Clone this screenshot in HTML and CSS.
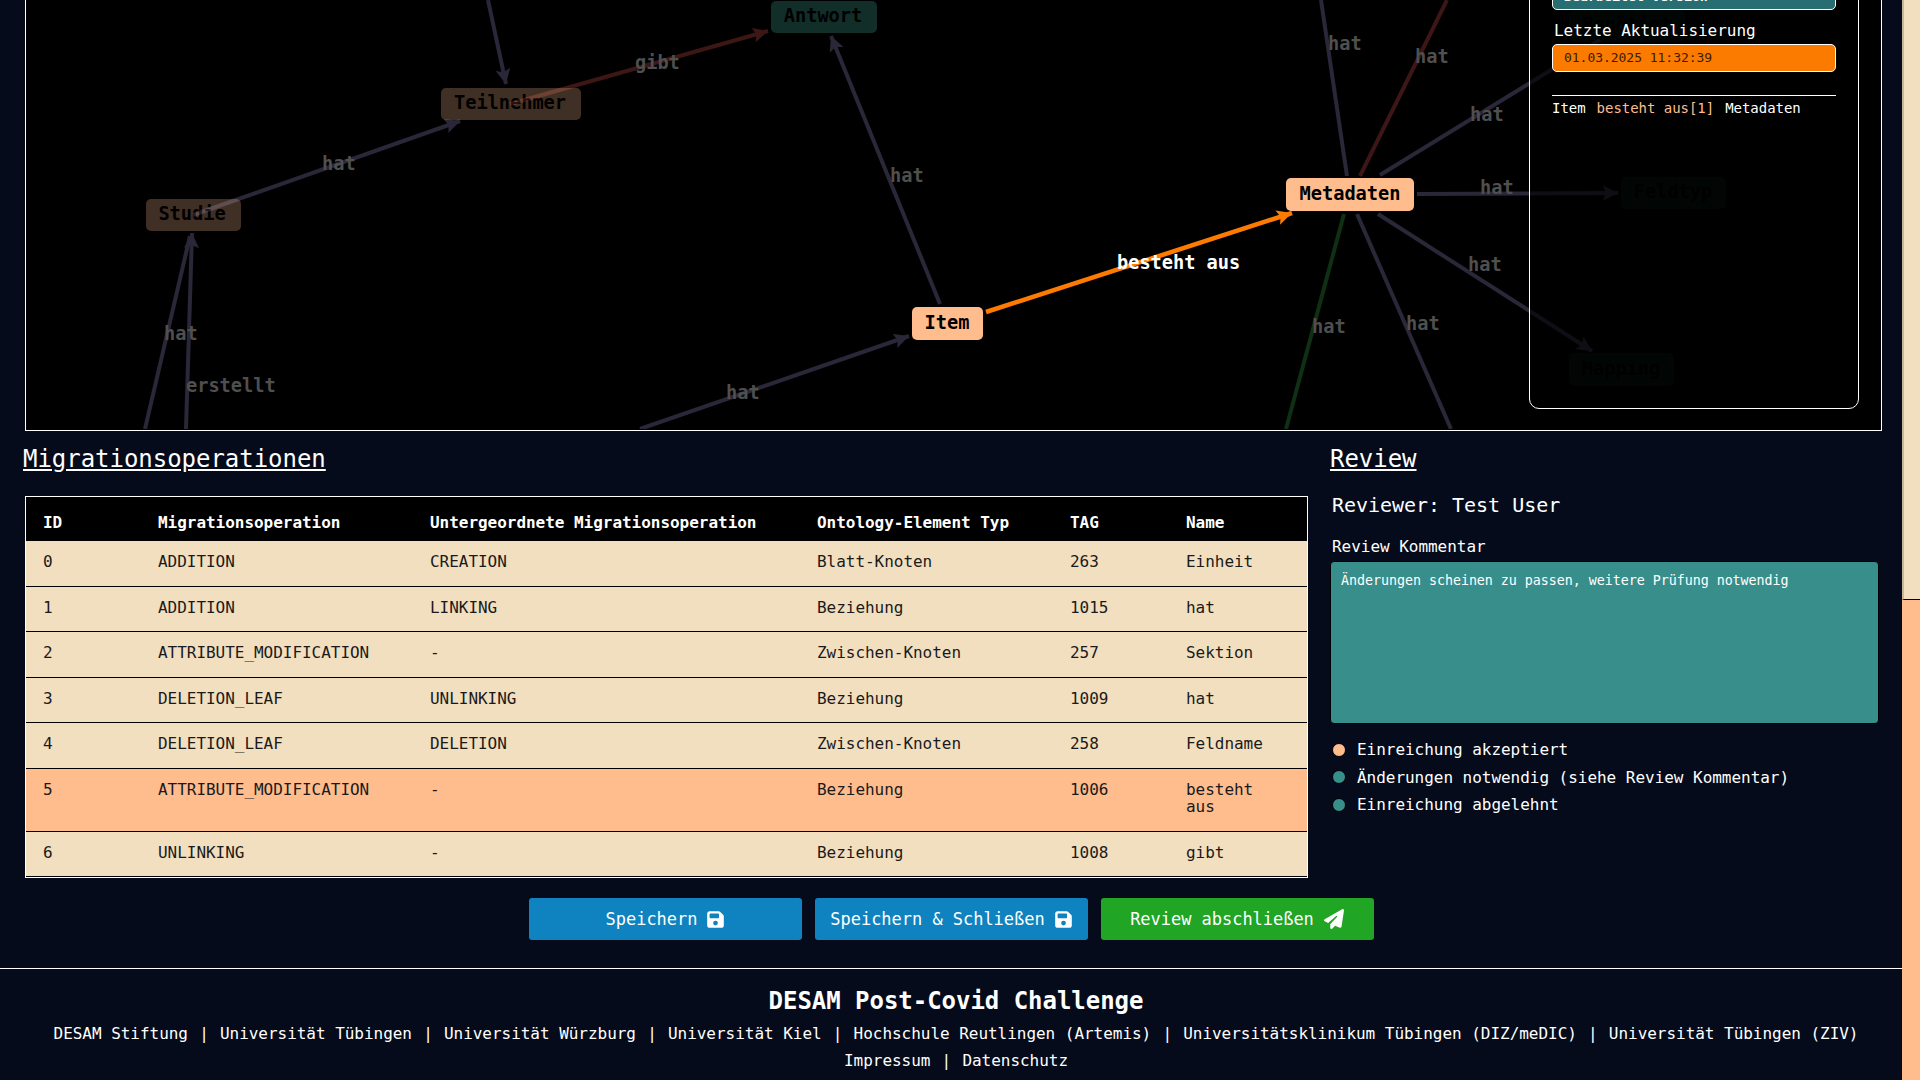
FILE: index.html
```html
<!DOCTYPE html>
<html lang="de">
<head>
<meta charset="utf-8">
<title>DESAM Post-Covid Challenge</title>
<link rel="stylesheet" href="styles.css">
</head>
<body>
<div class="page">
  <main class="main">
    <section class="graph">
      <svg class="canvas" width="1855" height="429" viewBox="26 0 1855 429">
        <defs>
          <marker id="a-purple" viewBox="0 0 10 10" refX="10" refY="5" markerWidth="15" markerHeight="15" markerUnits="userSpaceOnUse" orient="auto"><path d="M0 0L10 5L0 10L2 5Z" fill="#2a2738"/></marker>
          <marker id="a-red" viewBox="0 0 10 10" refX="10" refY="5" markerWidth="15" markerHeight="15" markerUnits="userSpaceOnUse" orient="auto"><path d="M0 0L10 5L0 10L2 5Z" fill="#3d1715"/></marker>
          <marker id="a-orange" viewBox="0 0 10 10" refX="10" refY="5" markerWidth="15" markerHeight="15" markerUnits="userSpaceOnUse" orient="auto"><path d="M0 0L10 5L0 10L2 5Z" fill="#ff7b00"/></marker>
        </defs>
        <g class="edges">
          <line class="e purple" x1="193" y1="215" x2="460" y2="121" marker-end="url(#a-purple)"/>
          <line class="e purple" x1="488" y1="0" x2="506" y2="84" marker-end="url(#a-purple)"/>
          <line class="e red" x1="510" y1="104" x2="768" y2="31" marker-end="url(#a-red)"/>
          <line class="e purple" x1="940" y1="304" x2="831" y2="36" marker-end="url(#a-purple)"/>
          <line class="e purple" x1="640" y1="429" x2="909" y2="336" marker-end="url(#a-purple)"/>
          <line class="e purple" x1="145" y1="429" x2="190" y2="236"/>
          <line class="e purple" x1="186" y1="429" x2="192" y2="233" marker-end="url(#a-purple)"/>
          <line class="e purple" x1="1321" y1="0" x2="1347" y2="176"/>
          <line class="e red" x1="1447" y1="0" x2="1360" y2="176"/>
          <line class="e purple" x1="1380" y1="175" x2="1600" y2="40"/>
          <line class="e purple" x1="1417" y1="194" x2="1618" y2="193" marker-end="url(#a-purple)"/>
          <line class="e purple" x1="1378" y1="214" x2="1592" y2="351" marker-end="url(#a-purple)"/>
          <line class="e purple" x1="1357" y1="214" x2="1451" y2="429"/>
          <line class="e green" x1="1344" y1="214" x2="1286" y2="429"/>
          <line class="e orange" x1="986" y1="312" x2="1292" y2="213" marker-end="url(#a-orange)"/>
        </g>
        <g class="labels">
          <text class="lbl" x="322" y="170">hat</text>
          <text class="lbl" x="635" y="69">gibt</text>
          <text class="lbl" x="890" y="182">hat</text>
          <text class="lbl" x="726" y="399">hat</text>
          <text class="lbl" x="164" y="340">hat</text>
          <text class="lbl" x="186" y="392">erstellt</text>
          <text class="lbl" x="1328" y="50">hat</text>
          <text class="lbl" x="1415" y="63">hat</text>
          <text class="lbl" x="1470" y="121">hat</text>
          <text class="lbl" x="1480" y="194">hat</text>
          <text class="lbl" x="1468" y="271">hat</text>
          <text class="lbl" x="1406" y="330">hat</text>
          <text class="lbl" x="1312" y="333">hat</text>
          <text class="lbl on" x="1117" y="269">besteht aus</text>
        </g>
        <g class="node peach dim"><rect x="441" y="88" width="140" height="32" rx="5"/><text x="510" y="109">Teilnehmer</text></g>
        <g class="node peach dim"><rect x="146" y="199" width="95" height="32" rx="5"/><text x="192" y="220">Studie</text></g>
        <g class="node teal dim"><rect x="771" y="1" width="106" height="32" rx="5"/><text x="823" y="22">Antwort</text></g>
        <g class="node teal faint"><rect x="1569" y="10" width="116" height="32" rx="5"/><text x="1627" y="31">Benötigt</text></g>
        <g class="node teal faint"><rect x="1621" y="177" width="105" height="32" rx="5"/><text x="1673" y="198">Feldtyp</text></g>
        <g class="node teal faint"><rect x="1569" y="353" width="105" height="33" rx="5"/><text x="1621" y="375">Mapping</text></g>
        <g class="node peach"><rect x="912" y="307" width="71" height="33" rx="5"/><text x="947" y="329">Item</text></g>
        <g class="node peach"><rect x="1286" y="178" width="128" height="33" rx="5"/><text x="1350" y="200">Metadaten</text></g>
      </svg>
      <aside class="panel">
        <div class="status">Bearbeitet Version</div>
        <div class="panel-label">Letzte Aktualisierung</div>
        <div class="stamp">01.03.2025 11:32:39</div>
        <hr class="panel-rule">
        <div class="path"><span>Item</span><span class="rel">besteht aus[1]</span><span>Metadaten</span></div>
      </aside>
    </section>

    <section class="work">
      <div class="ops">
        <h2 class="title">Migrationsoperationen</h2>
        <table class="table">
          <colgroup>
            <col class="c1"><col class="c2"><col class="c3"><col class="c4"><col class="c5"><col class="c6">
          </colgroup>
          <thead>
            <tr><th>ID</th><th>Migrationsoperation</th><th>Untergeordnete Migrationsoperation</th><th>Ontology-Element Typ</th><th>TAG</th><th>Name</th></tr>
          </thead>
          <tbody>
            <tr><td>0</td><td>ADDITION</td><td>CREATION</td><td>Blatt-Knoten</td><td>263</td><td>Einheit</td></tr>
            <tr><td>1</td><td>ADDITION</td><td>LINKING</td><td>Beziehung</td><td>1015</td><td>hat</td></tr>
            <tr><td>2</td><td>ATTRIBUTE_MODIFICATION</td><td>-</td><td>Zwischen-Knoten</td><td>257</td><td>Sektion</td></tr>
            <tr><td>3</td><td>DELETION_LEAF</td><td>UNLINKING</td><td>Beziehung</td><td>1009</td><td>hat</td></tr>
            <tr><td>4</td><td>DELETION_LEAF</td><td>DELETION</td><td>Zwischen-Knoten</td><td>258</td><td>Feldname</td></tr>
            <tr class="active"><td>5</td><td>ATTRIBUTE_MODIFICATION</td><td>-</td><td>Beziehung</td><td>1006</td><td>besteht aus</td></tr>
            <tr><td>6</td><td>UNLINKING</td><td>-</td><td>Beziehung</td><td>1008</td><td>gibt</td></tr>
          </tbody>
        </table>
      </div>
      <div class="review">
        <h2 class="title">Review</h2>
        <div class="reviewer">Reviewer: Test User</div>
        <div class="comment-label">Review Kommentar</div>
        <div class="comment">Änderungen scheinen zu passen, weitere Prüfung notwendig</div>
        <ul class="choices">
          <li class="choice"><span class="dot on"></span>Einreichung akzeptiert</li>
          <li class="choice"><span class="dot"></span>Änderungen notwendig (siehe Review Kommentar)</li>
          <li class="choice"><span class="dot"></span>Einreichung abgelehnt</li>
        </ul>
      </div>
    </section>

    <div class="actions">
      <button class="btn blue">Speichern <svg class="ico" viewBox="0 0 448 512"><path d="M64 32C28.7 32 0 60.7 0 96V416c0 35.3 28.7 64 64 64H384c35.3 0 64-28.7 64-64V173.3c0-17-6.7-33.3-18.7-45.3L352 50.7C340 38.7 323.7 32 306.7 32H64zm0 96c0-17.7 14.3-32 32-32H288c17.7 0 32 14.3 32 32v64c0 17.7-14.3 32-32 32H96c-17.7 0-32-14.3-32-32V128zM224 288a64 64 0 1 1 0 128 64 64 0 1 1 0-128z"/></svg></button>
      <button class="btn blue">Speichern &amp; Schließen <svg class="ico" viewBox="0 0 448 512"><path d="M64 32C28.7 32 0 60.7 0 96V416c0 35.3 28.7 64 64 64H384c35.3 0 64-28.7 64-64V173.3c0-17-6.7-33.3-18.7-45.3L352 50.7C340 38.7 323.7 32 306.7 32H64zm0 96c0-17.7 14.3-32 32-32H288c17.7 0 32 14.3 32 32v64c0 17.7-14.3 32-32 32H96c-17.7 0-32-14.3-32-32V128zM224 288a64 64 0 1 1 0 128 64 64 0 1 1 0-128z"/></svg></button>
      <button class="btn green">Review abschließen <svg class="ico wide" viewBox="0 0 512 512"><path d="M498.1 5.6c10.1 7 15.4 19.1 13.5 31.2l-64 416c-1.5 9.7-7.4 18.2-16 23s-18.9 5.4-28 1.6L284 427.7l-68.5 74.1c-8.9 9.7-22.9 12.9-35.2 8.1S160 493.2 160 480V396.4c0-4 1.5-7.8 4.2-10.7L331.8 202.8c5.8-6.3 5.6-16-.4-22s-15.7-6.4-22-.7L106 360.8 17.7 316.6C7.1 311.3 .3 300.7 0 288.9s5.9-22.8 16.1-28.7l448-256c10.7-6.1 23.9-5.5 34 1.4z"/></svg></button>
    </div>

    <footer class="footer">
      <div class="foot-title">DESAM Post-Covid Challenge</div>
      <nav class="foot-links">
        <a>DESAM Stiftung</a><span>|</span><a>Universität Tübingen</a><span>|</span><a>Universität Würzburg</a><span>|</span><a>Universität Kiel</a><span>|</span><a>Hochschule Reutlingen (Artemis)</a><span>|</span><a>Universitätsklinikum Tübingen (DIZ/meDIC)</a><span>|</span><a>Universität Tübingen (ZIV)</a>
      </nav>
      <nav class="foot-links">
        <a>Impressum</a><span>|</span><a>Datenschutz</a>
      </nav>
    </footer>
  </main>
  <div class="scrollbar"><div class="thumb"></div></div>
</div>
</body>
</html>
```
FILE: styles.css
```css
* { box-sizing: border-box; }
html, body { margin: 0; height: 100%; overflow: hidden; }
body {
  background: #050b1a;
  color: #fff;
  font-family: "DejaVu Sans Mono", "Liberation Mono", monospace;
  font-size: 16px;
  letter-spacing: -.002em;
}
.page { display: flex; height: 1080px; }
.main { width: 1902px; flex: none; }

.graph {
  position: relative;
  height: 431px;
  margin: 0 20px 0 25px;
  background: #000;
  border: 1px solid #fff;
  border-top: 0;
  overflow: hidden;
}
.canvas { display: block; }
.e { stroke-width: 4; fill: none; }
.e.purple { stroke: #2a2738; }
.e.red { stroke: #3d1715; }
.e.green { stroke: #0f3014; }
.e.orange { stroke: #ff7b00; stroke-width: 4.5; }
.lbl { font-size: 18.67px; fill: #4f4f4f; font-weight: 700; }
.lbl.on { fill: #fff; }
.node text { font-size: 18.67px; text-anchor: middle; fill: #000; font-weight: 700; }
.node.peach rect { fill: #ffbd8e; }
.node.teal rect { fill: #388e7f; }
.node.dim { opacity: .25; }
.node.teal.dim { opacity: .32; }
.node.faint { opacity: .1; }

.panel {
  position: absolute;
  left: 1503px;
  top: -60px;
  width: 330px;
  height: 469px;
  padding: 0 22px;
  background: rgba(0, 0, 0, .62);
  border: 1px solid #fff;
  border-radius: 10px;
  display: flex;
  flex-direction: column;
}
.status {
  margin-top: 35px;
  height: 34px;
  padding: 12px 11px 0;
  background: #266e72;
  border: 1px solid #fff;
  border-radius: 5px;
  font-size: 13.33px;
  line-height: 16px;
  font-weight: 700;
}
.panel-label { margin-top: 11px; height: 23px; padding-left: 2px; line-height: 20px; }
.stamp {
  height: 28px;
  padding-left: 11px;
  line-height: 26px;
  background: #fb7a00;
  border: 1px solid #fff;
  border-radius: 5px;
  color: #3a1c00;
  font-size: 13px;
}
.panel-rule { width: 100%; margin: 23px 0 0; border: 0; border-top: 1px solid #fff; }
.path { display: flex; gap: 11px; margin-top: 3px; font-size: 14px; line-height: 18px; }
.rel { color: #ffbd8e; }

.work { display: flex; padding-left: 23px; }
.ops { width: 1284px; flex: none; }
.title {
  margin: 14px 0 0;
  font-size: 24px;
  font-weight: 400;
  line-height: 28px;
  text-decoration: underline;
}
.table {
  width: 1283px;
  margin: 23px 0 0 2px;
  border-collapse: separate;
  border-spacing: 0;
  table-layout: fixed;
  background: #f2dfc0;
  border: 1px solid #fff;
  color: #1a1a1a;
}
.c1 { width: 115px; }
.c2 { width: 272px; }
.c3 { width: 387px; }
.c4 { width: 253px; }
.c5 { width: 116px; }
.c6 { width: 138px; }
.table th {
  height: 44px;
  padding: 6px 17px 0;
  background: #000;
  color: #fff;
  text-align: left;
  font-weight: 700;
}
.table td {
  padding: 12px 17px 15.6px;
  line-height: 17px;
  vertical-align: top;
  border-bottom: 1px solid #000;
}
.active td { background: #ffbd8e; }

.review { margin-left: 23px; width: 550px; }
.reviewer { margin: 20px 0 0 2px; font-size: 20px; line-height: 24px; }
.comment-label { margin: 19.5px 0 0 2px; line-height: 20px; }
.comment {
  height: 163px;
  margin: 4.5px 0 0 0;
  width: 549px;
  padding: 11px 10px;
  background: #388e8a;
  border: 1px solid #000;
  border-radius: 4px;
  font-size: 13.33px;
  line-height: 16px;
}
.choices { list-style: none; margin: 12px 0 0 2px; padding: 0; }
.choice { display: flex; align-items: center; gap: 11px; height: 27.5px; }
.dot { width: 14px; height: 14px; border: 1px solid #000; border-radius: 50%; background: #388e8a; }
.dot.on { background: #ffbd8e; }

.actions { display: flex; justify-content: center; gap: 13px; margin-top: 20px; }
.btn {
  width: 273px;
  height: 42px;
  border: 0;
  border-radius: 3px;
  color: #fff;
  font-family: inherit;
  font-size: 17px;
  letter-spacing: inherit;
  display: flex;
  align-items: center;
  justify-content: center;
  gap: 10px;
}
.btn.blue { background: #0f83c0; }
.btn.green { background: #20a525; }
.ico { width: 17px; height: 19px; fill: #fff; }
.ico.wide { width: 20px; height: 20px; }

.footer { margin-top: 28px; padding: 18px 0 0 10px; border-top: 1px solid #fff; text-align: center; }
.foot-title { font-size: 24px; font-weight: 700; line-height: 28px; }
.foot-links { display: flex; justify-content: center; gap: 11.2px; margin-top: 9.5px; line-height: 18px; }

.scrollbar { width: 18px; flex: none; height: 100%; background: #ffbd8e; }
.thumb { height: 600px; background: #f2dfc0; border-bottom: 1px solid #000; border-left: 2px solid #c9b79c; }
```
